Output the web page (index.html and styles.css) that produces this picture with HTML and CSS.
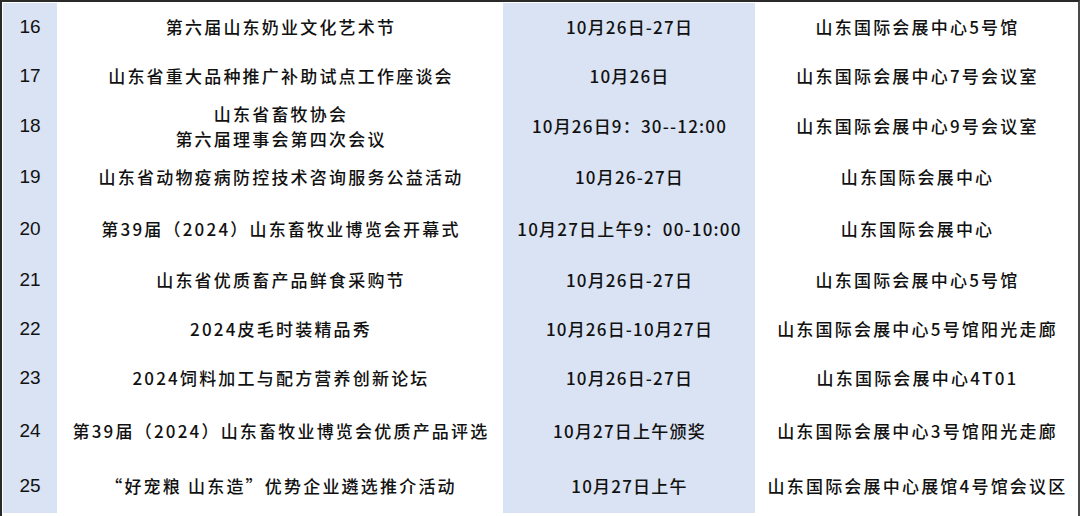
FILE: index.html
```html
<!DOCTYPE html>
<html lang="zh-CN">
<head>
<meta charset="utf-8">
<title>活动日程</title>
<link rel="stylesheet" href="styles.css">
</head>
<body>
<div class="sheet">
  <div class="table">
    <div class="row r16"><div class="no">16</div><div class="ev">第六届山东奶业文化艺术节</div><div class="dt">10月26日-27日</div><div class="loc">山东国际会展中心5号馆</div></div>
    <div class="row r17"><div class="no">17</div><div class="ev">山东省重大品种推广补助试点工作座谈会</div><div class="dt">10月26日</div><div class="loc">山东国际会展中心7号会议室</div></div>
    <div class="row r18"><div class="no">18</div><div class="ev two"><span class="line">山东省畜牧协会</span><span class="line">第六届理事会第四次会议</span></div><div class="dt">10月26日9：30--12:00</div><div class="loc">山东国际会展中心9号会议室</div></div>
    <div class="row r19"><div class="no">19</div><div class="ev">山东省动物疫病防控技术咨询服务公益活动</div><div class="dt">10月26-27日</div><div class="loc">山东国际会展中心</div></div>
    <div class="row r20"><div class="no">20</div><div class="ev">第39届（2024）山东畜牧业博览会开幕式</div><div class="dt">10月27日上午9：00-10:00</div><div class="loc">山东国际会展中心</div></div>
    <div class="row r21"><div class="no">21</div><div class="ev">山东省优质畜产品鲜食采购节</div><div class="dt">10月26日-27日</div><div class="loc">山东国际会展中心5号馆</div></div>
    <div class="row r22"><div class="no">22</div><div class="ev">2024皮毛时装精品秀</div><div class="dt">10月26日-10月27日</div><div class="loc">山东国际会展中心5号馆阳光走廊</div></div>
    <div class="row r23"><div class="no">23</div><div class="ev">2024饲料加工与配方营养创新论坛</div><div class="dt">10月26日-27日</div><div class="loc">山东国际会展中心4T01</div></div>
    <div class="row r24"><div class="no">24</div><div class="ev">第39届（2024）山东畜牧业博览会优质产品评选</div><div class="dt">10月27日上午颁奖</div><div class="loc">山东国际会展中心3号馆阳光走廊</div></div>
    <div class="row r25"><div class="no">25</div><div class="ev">“好宠粮 山东造”优势企业遴选推介活动</div><div class="dt">10月27日上午</div><div class="loc">山东国际会展中心展馆4号馆会议区</div></div>
  </div>
</div>
</body>
</html>
```

FILE: styles.css
```css
html, body {
  margin: 0;
  padding: 0;
  background: #ffffff;
}

body {
  font-family: "Noto Sans CJK SC", "Noto Sans", sans-serif;
  color: #111111;
}

.sheet {
  box-sizing: border-box;
  width: 1080px;
  height: 516px;
  border-top: 2px solid #2a2a2a;
  border-left: 2px solid #2a2a2a;
  border-right: 2px solid #4a4a4a;
  padding: 1px 0 0 1px;
  overflow: hidden;
}

.table {
  display: flex;
  flex-direction: column;
}

.row {
  display: grid;
  grid-template-columns: 54px 446px 252px 1fr;
}

.r16 { height: 48px; }
.r17 { height: 49px; }
.r18 { height: 51px; }
.r19 { height: 52px; }
.r20 { height: 52px; }
.r21 { height: 50px; }
.r22 { height: 48px; }
.r23 { height: 50px; }
.r24 { height: 56px; }
.r25 { height: 54px; }

.row > div {
  display: flex;
  align-items: center;
  justify-content: center;
  text-align: center;
  white-space: nowrap;
  line-height: 22px;
  font-weight: 500;
}

.no {
  background: #dae3f3;
  font-size: 19px;
  font-family: "Liberation Sans", "Noto Sans CJK SC", sans-serif;
}

.row > .no {
  font-weight: 400;
}

.ev, .loc {
  font-size: 17px;
  letter-spacing: 2.2px;
  padding-left: 2px;
}

.dt {
  background: #dae3f3;
  font-size: 17px;
  letter-spacing: 1.2px;
  padding-left: 1px;
}

.row > .ev.two {
  flex-direction: column;
  line-height: 25px;
}

.line {
  display: block;
}
```
